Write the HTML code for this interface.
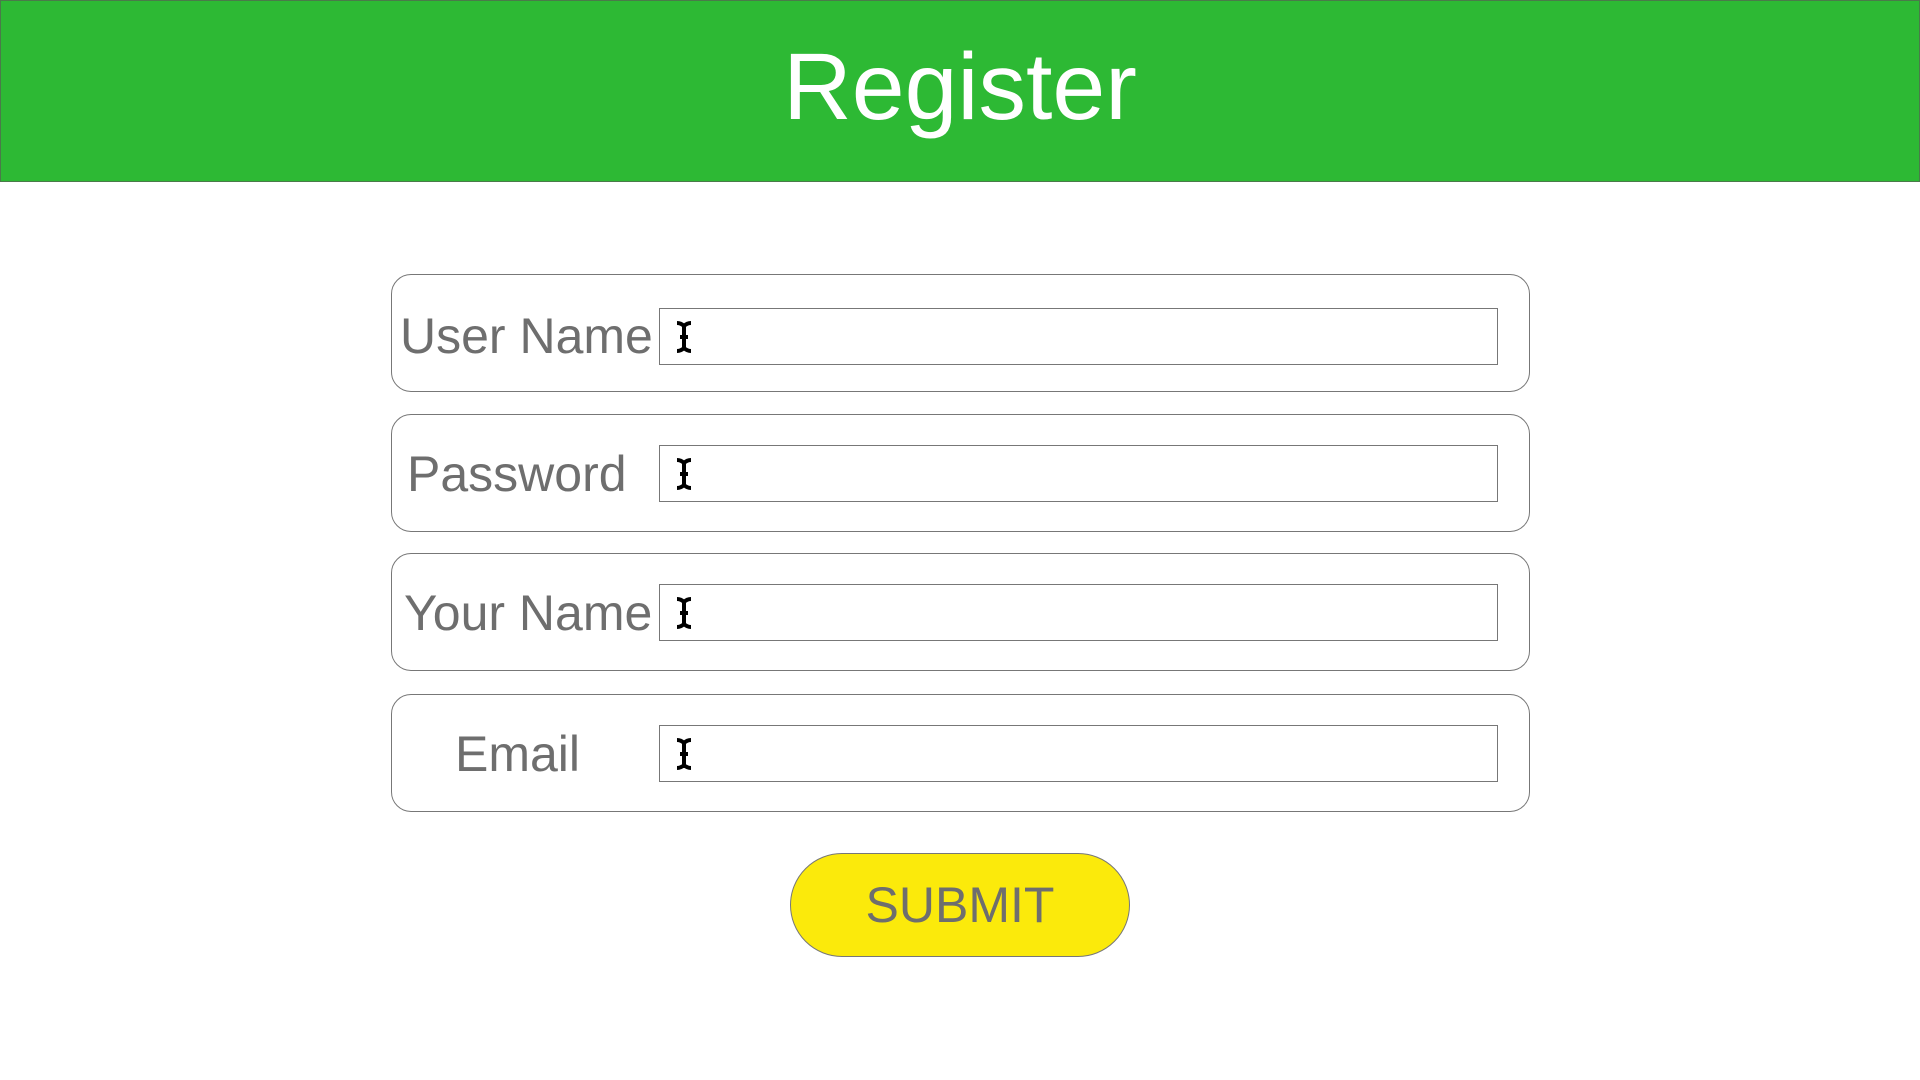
<!DOCTYPE html>
<html><head><style>
body{margin:0;width:1920px;height:1080px;background:#fff;font-family:"Liberation Sans",sans-serif;position:relative;overflow:hidden}
.hdr{position:absolute;left:0;top:0;width:1918px;height:180px;background:#2db934;border:1px solid #4a7a4a}
.hdr span{position:absolute;left:0;right:0;top:26px;text-align:center;color:#fff;font-size:95px;line-height:120px}
.box{position:absolute;left:391px;width:1137px;height:116px;border:1px solid #777;border-radius:20px}
.lab{position:absolute;top:29px;font-size:50px;line-height:60px;color:#6e6e6e;white-space:nowrap}
.inp{position:absolute;left:267px;top:30px;width:837px;height:55px;border:1px solid #777}
.cur{position:absolute;left:14px;top:11px}
.btn{position:absolute;left:790px;top:853px;width:338px;height:102px;background:#fbea0b;border:1px solid #777;border-radius:52px;text-align:center;color:#6e6e6e;font-size:50px;line-height:102px}
</style></head><body>
<div class="hdr"><span>Register</span></div>
<div class="box" style="top:274px"><div class="lab" style="left:8px;top:31px">User Name</div><div class="inp" style="top:33px"><svg class="cur" width="20" height="34" viewBox="0 0 20 34"><path d="M3 3 Q7 3 10 6 Q13 3 17 3 M10 6 V28 M3 31 Q7 31 10 28 Q13 31 17 31 M6 17 H14" stroke="#000" stroke-width="4" fill="none"/></svg></div></div>
<div class="box" style="top:414px"><div class="lab" style="left:15px">Password</div><div class="inp"><svg class="cur" width="20" height="34" viewBox="0 0 20 34"><path d="M3 3 Q7 3 10 6 Q13 3 17 3 M10 6 V28 M3 31 Q7 31 10 28 Q13 31 17 31 M6 17 H14" stroke="#000" stroke-width="4" fill="none"/></svg></div></div>
<div class="box" style="top:553px"><div class="lab" style="left:12px">Your Name</div><div class="inp"><svg class="cur" width="20" height="34" viewBox="0 0 20 34"><path d="M3 3 Q7 3 10 6 Q13 3 17 3 M10 6 V28 M3 31 Q7 31 10 28 Q13 31 17 31 M6 17 H14" stroke="#000" stroke-width="4" fill="none"/></svg></div></div>
<div class="box" style="top:694px"><div class="lab" style="left:63px">Email</div><div class="inp"><svg class="cur" width="20" height="34" viewBox="0 0 20 34"><path d="M3 3 Q7 3 10 6 Q13 3 17 3 M10 6 V28 M3 31 Q7 31 10 28 Q13 31 17 31 M6 17 H14" stroke="#000" stroke-width="4" fill="none"/></svg></div></div>
<div class="btn">SUBMIT</div>
</body></html>
